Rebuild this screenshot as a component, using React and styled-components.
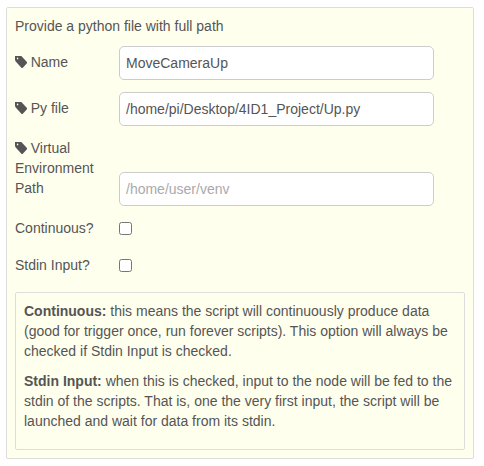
import React, { useState } from "react";
import styled, { createGlobalStyle } from "styled-components";

const GlobalStyle = createGlobalStyle`
  *, *::before, *::after { box-sizing: border-box; }
  body {
    margin: 0;
    background: #fff;
    color: #555;
    font: 14px/20px "Liberation Sans", Helvetica, Arial, sans-serif;
  }
`;

const Panel = styled.section`
  width: 468px;
  margin: 7px 0 0 6px;
  padding: 8px;
  border: 1px solid #ddd;
  border-radius: 2px;
  background: #ffffee;
`;

const Intro = styled.div`
  margin-bottom: 10px;
`;

const Row = styled.div`
  display: flex;
  align-items: flex-end;
  margin-bottom: ${(p) => (p.$gap ?? 12)}px;
`;

const Label = styled.label`
  width: 80px;
  margin-right: 24px;
  padding-bottom: ${(p) => (p.$check ? 0 : 8)}px;
`;

const TextInput = styled.input`
  width: 315px;
  height: 34px;
  padding: 0 6px;
  border: 1px solid #ccc;
  border-radius: 5px;
  outline: none;
  background: #fff;
  color: #555;
  font: inherit;

  &::placeholder {
    color: #aaa;
    opacity: 1;
  }
`;

const Checkbox = styled.input.attrs({ type: "checkbox" })`
  width: 13px;
  height: 13px;
  margin: 0 0 3px;
`;

const Tips = styled.div`
  padding: 8px;
  border: 1px solid #ddd;
  border-radius: 2px;
`;

const Paragraph = styled.p`
  margin: 0 0 10px;
`;

const TagSvg = styled.svg`
  width: 12px;
  height: 12px;
  margin-right: -0.2px;
  vertical-align: -1px;
`;

const TagIcon = () => (
  <TagSvg viewBox="0 256 1515 1387" preserveAspectRatio="none" aria-hidden="true">
    <g transform="translate(0 1536) scale(1 -1)">
      <path
        fill="currentColor"
        d="M1515 512q0 -53 -37 -90l-491 -492q-39 -37 -91 -37q-53 0 -90 37l-715 716q-38 37 -64.5 101t-26.5 117v416q0 52 38 90t90 38h416q53 0 117 -26.5t102 -64.5l715 -714q37 -39 37 -91z"
      />
      <circle cx="325" cy="1000" r="98" fill="#ffffee" />
    </g>
  </TagSvg>
);

const TextField = ({ id, label, initial = "", placeholder }) => {
  const [value, setValue] = useState(initial);
  return (
    <Row>
      <Label htmlFor={id}>
        <TagIcon /> {label}
      </Label>
      <TextInput
        id={id}
        type="text"
        spellCheck={false}
        value={value}
        placeholder={placeholder}
        onChange={(e) => setValue(e.target.value)}
      />
    </Row>
  );
};

export default function App() {
  return (
    <>
      <GlobalStyle />
      <Panel>
        <Intro>Provide a python file with full path</Intro>
        <TextField id="name" label="Name" initial="MoveCameraUp" />
        <TextField id="pyfile" label="Py file" initial="/home/pi/Desktop/4ID1_Project/Up.py" />
        <TextField id="venv" label="Virtual Environment Path" placeholder="/home/user/venv" />
        <Row $gap={17}>
          <Label $check htmlFor="continuous">Continuous?</Label>
          <Checkbox id="continuous" />
        </Row>
        <Row $gap={17}>
          <Label $check htmlFor="stdin">Stdin Input?</Label>
          <Checkbox id="stdin" />
        </Row>
        <Tips>
          <Paragraph>
            <b>Continuous:</b> this means the script will continuously produce data (good for
            trigger once, run forever scripts). This option will always be checked if Stdin Input
            is checked.
          </Paragraph>
          <Paragraph>
            <b>Stdin Input:</b> when this is checked, input to the node will be fed to the stdin of
            the scripts. That is, one the very first input, the script will be launched and wait
            for data from its stdin.
          </Paragraph>
        </Tips>
      </Panel>
    </>
  );
}
